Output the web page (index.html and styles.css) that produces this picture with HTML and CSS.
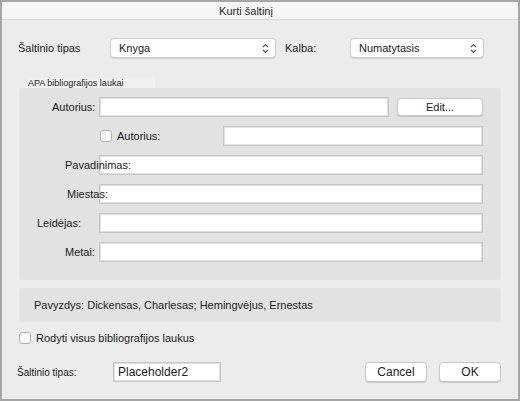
FILE: index.html
```html
<!DOCTYPE html>
<html lang="lt">
<head>
  <meta charset="UTF-8" />
  <title>Kurti šaltinį</title>
  <link rel="stylesheet" href="styles.css">
</head>
<body>
  <div class="window">
    <div class="titlebar">Kurti šaltinį</div>
    <div class="content">
      <div class="top-row">
        <span class="top-label source-label">Šaltinio tipas</span>
        <div class="select select-type">
          <span>Knyga</span>
          <svg class="chevron" width="7" height="11" viewBox="0 0 7 11"><path d="M1 4 L3.5 1.5 L6 4 M1 7 L3.5 9.5 L6 7" fill="none" stroke="#555" stroke-width="1.2"/></svg>
        </div>
        <span class="top-label lang-label">Kalba:</span>
        <div class="select select-lang">
          <span>Numatytasis</span>
          <svg class="chevron" width="7" height="11" viewBox="0 0 7 11"><path d="M1 4 L3.5 1.5 L6 4 M1 7 L3.5 9.5 L6 7" fill="none" stroke="#555" stroke-width="1.2"/></svg>
        </div>
      </div>

      <div class="group-tab">APA bibliografijos laukai</div>
      <div class="group">
        <div class="field">
          <div class="field-body">
            <div class="input input-grow"></div>
            <button class="btn btn-edit">Edit...</button>
          </div>
          <label class="field-label lbl-author">Autorius:</label>
        </div>
        <div class="field">
          <div class="field-body">
            <span class="check-inline"><span class="checkbox"></span>Autorius:</span>
            <div class="input input-grow"></div>
          </div>
        </div>
        <div class="field">
          <div class="field-body"><div class="input input-grow"></div></div>
          <label class="field-label lbl-title">Pavadinimas:</label>
        </div>
        <div class="field">
          <div class="field-body"><div class="input input-grow"></div></div>
          <label class="field-label lbl-city">Miestas:</label>
        </div>
        <div class="field">
          <div class="field-body"><div class="input input-grow"></div></div>
          <label class="field-label lbl-publisher">Leidėjas:</label>
        </div>
        <div class="field">
          <div class="field-body"><div class="input input-grow"></div></div>
          <label class="field-label lbl-year">Metai:</label>
        </div>
      </div>

      <div class="example">Pavyzdys: Dickensas, Charlesas; Hemingvėjus, Ernestas</div>

      <div class="show-all"><span class="checkbox"></span>Rodyti visus bibliografijos laukus</div>

      <div class="bottom-row">
        <span class="tag-label">Šaltinio tipas:</span>
        <div class="input input-tag">Placeholder2</div>
        <div class="spacer"></div>
        <button class="btn btn-dialog">Cancel</button>
        <button class="btn btn-dialog">OK</button>
      </div>
    </div>
  </div>
</body>
</html>
```

FILE: styles.css
```css
body {
  margin: 0;
  font-family: "Liberation Sans", Arial, sans-serif;
}
.window {
  width: 520px;
  height: 401px;
  box-sizing: border-box;
  border: 2px solid #a6a6a6;
  background: #ececec;
  font-size: 11px;
  color: #1b1b1b;
}
.titlebar {
  height: 17px;
  background: #f6f6f6;
  border-bottom: 1px solid #dadada;
  display: flex;
  align-items: center;
  justify-content: center;
  padding-right: 28px;
  color: #2a2a2a;
}
.content {
  padding: 18px 17px 0 17px;
}
/* top row */
.top-row {
  display: flex;
  align-items: center;
  height: 20px;
}
.top-label {
  flex: none;
}
.source-label {
  width: 92px;
  margin-left: -1px;
}
.lang-label {
  width: 65px;
  margin-left: 9px;
}
.select {
  box-sizing: border-box;
  height: 20px;
  display: flex;
  align-items: center;
  justify-content: space-between;
  padding: 0 6px 0 8px;
  background: #fff;
  border: 1px solid #cfcfcf;
  border-radius: 4px;
  box-shadow: 0 1px 1px rgba(0, 0, 0, 0.12);
}
.select-type {
  width: 166px;
}
.select-lang {
  width: 134px;
}
/* group */
.group-tab {
  width: 128px;
  height: 11px;
  margin: 20px 0 0 8px;
  padding-left: 1px;
  box-sizing: border-box;
  background: #f1f1f1;
  font-size: 9px;
  line-height: 11px;
  color: #222;
}
.group {
  margin-top: -1px;
  background: #e2e2e2;
  border-radius: 3px;
  padding: 9px 18px 18px 0;
  display: flex;
  flex-direction: column;
  gap: 9px;
}
.field {
  display: grid;
  grid-template-columns: 80px 1fr;
  height: 20px;
  align-items: center;
}
.field-body {
  grid-area: 1 / 2 / 2 / 3;
  display: flex;
  align-items: center;
  height: 100%;
}
.field-label {
  grid-area: 1 / 1 / 2 / 3;
  position: relative;
  pointer-events: none;
}
.lbl-author { padding-left: 33px; }
.lbl-title { padding-left: 46px; }
.lbl-city { padding-left: 48px; }
.lbl-publisher { padding-left: 18px; }
.lbl-year { padding-left: 46px; }
.input {
  box-sizing: border-box;
  height: 20px;
  background: #fff;
  border: 1px solid #c6c6c6;
  box-shadow: inset 0 0 0 1px #e0e0e0;
}
.input-grow {
  flex: 1;
}
.check-inline {
  display: flex;
  align-items: center;
  width: 124px;
  flex: none;
}
.checkbox {
  box-sizing: border-box;
  width: 12px;
  height: 12px;
  margin: 0 5px 0 1px;
  background: #fff;
  border: 1px solid #b0b0b0;
  border-radius: 3px;
  flex: none;
}
.btn {
  box-sizing: border-box;
  background: #fff;
  border: 1px solid #c8c8c8;
  border-radius: 4px;
  box-shadow: 0 1px 1px rgba(0, 0, 0, 0.15);
  font-family: "Liberation Sans", Arial, sans-serif;
  color: #222;
  padding: 0;
}
.btn-edit {
  width: 86px;
  height: 18px;
  margin-left: 8px;
  font-size: 11px;
}
/* example */
.example {
  margin-top: 8px;
  height: 34px;
  background: #e2e2e2;
  border-radius: 3px;
  padding-left: 15px;
  display: flex;
  align-items: center;
}
.show-all {
  margin-top: 10px;
  display: flex;
  align-items: center;
  height: 12px;
}
.show-all .checkbox {
  margin-left: 0;
}
/* bottom */
.bottom-row {
  margin-top: 18px;
  display: flex;
  align-items: center;
  height: 20px;
}
.tag-label {
  width: 96px;
  margin-left: -2px;
  font-size: 10px;
}
.input-tag {
  width: 108px;
  display: flex;
  align-items: center;
  padding-left: 4px;
  font-size: 12px;
}
.spacer {
  flex: 1;
}
.btn-dialog {
  width: 62px;
  height: 20px;
  margin-left: 12px;
  font-size: 12px;
}
```
